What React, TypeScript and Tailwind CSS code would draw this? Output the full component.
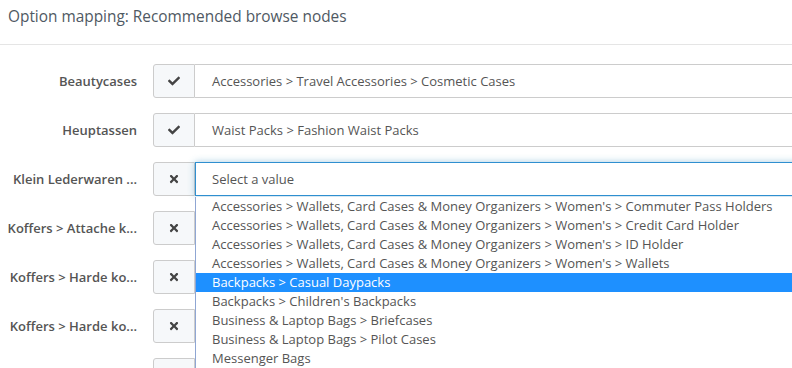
import { FaCheck, FaTimes } from "react-icons/fa";

type Row = { label: string; ok: boolean; value?: string; open?: boolean };

const rows: Row[] = [
  { label: "Beautycases", ok: true, value: "Accessories > Travel Accessories > Cosmetic Cases" },
  { label: "Heuptassen", ok: true, value: "Waist Packs > Fashion Waist Packs" },
  { label: "Klein Lederwaren ...", ok: false, open: true },
  { label: "Koffers > Attache k...", ok: false },
  { label: "Koffers > Harde ko...", ok: false },
  { label: "Koffers > Harde ko...", ok: false },
  { label: "", ok: false }
];

const options = [
  "Accessories > Wallets, Card Cases & Money Organizers > Women's > Commuter Pass Holders",
  "Accessories > Wallets, Card Cases & Money Organizers > Women's > Credit Card Holder",
  "Accessories > Wallets, Card Cases & Money Organizers > Women's > ID Holder",
  "Accessories > Wallets, Card Cases & Money Organizers > Women's > Wallets",
  "Backpacks > Casual Daypacks",
  "Backpacks > Children's Backpacks",
  "Business & Laptop Bags > Briefcases",
  "Business & Laptop Bags > Pilot Cases",
  "Messenger Bags"
];

export default function App() {
  return (
    <div
      className="h-[368px] w-[792px] overflow-hidden bg-white text-[#555]"
      style={{ fontFamily: '"Open Sans", "Liberation Sans", sans-serif' }}
    >
      <header className="h-[45px] border-b border-[#e5e5e5] px-2 pt-[7px]">
        <h1 className="text-[15.4px] font-medium leading-[20px] text-[#4f5963]">Option mapping: Recommended browse nodes</h1>
      </header>

      <div className="flex w-[900px] flex-col gap-[15px] pt-[19px]">
        {rows.map((r, i) => (
          <div key={i} className="flex items-center">
            <label className="w-[137px] shrink-0 whitespace-nowrap pt-[1px] text-right text-[13px] font-semibold text-[#555]">
              {r.label}
            </label>
            <div className="ml-[16px] flex h-[34px] w-[42px] shrink-0 items-center justify-center rounded-l-[3px] border border-[#ccc] bg-[#f6f8fa] text-[#444]">
              {r.label && (r.ok ? <FaCheck size={12} /> : <FaTimes size={12} />)}
            </div>
            {r.open ? (
              <div className="relative h-[34px] flex-1">
                <div className="flex h-[34px] items-center border border-[#2f8fd0] bg-white pl-[16px] pt-[1px] text-[13px] text-[#555] shadow-[0_0_7px_rgba(60,141,188,0.45)]">
                  Select a value
                </div>
                <ul className="absolute left-0 top-[35px] z-10 w-full border-l border-[#8fa6d3] bg-white">
                  {options.map((o, j) => (
                    <li
                      key={j}
                      className={`h-[19px] whitespace-nowrap pl-[16px] text-[13px] leading-[19px] ${
                        j === 4 ? "bg-[#1e90ff] text-white" : "text-[#555]"
                      }`}
                    >
                      {o}
                    </li>
                  ))}
                </ul>
              </div>
            ) : (
              <div className="flex h-[34px] flex-1 items-center border border-l-0 border-[#ccc] bg-white pl-[17px] pt-[1px] text-[13px] text-[#555]">
                {r.value}
              </div>
            )}
          </div>
        ))}
      </div>
    </div>
  );
}
